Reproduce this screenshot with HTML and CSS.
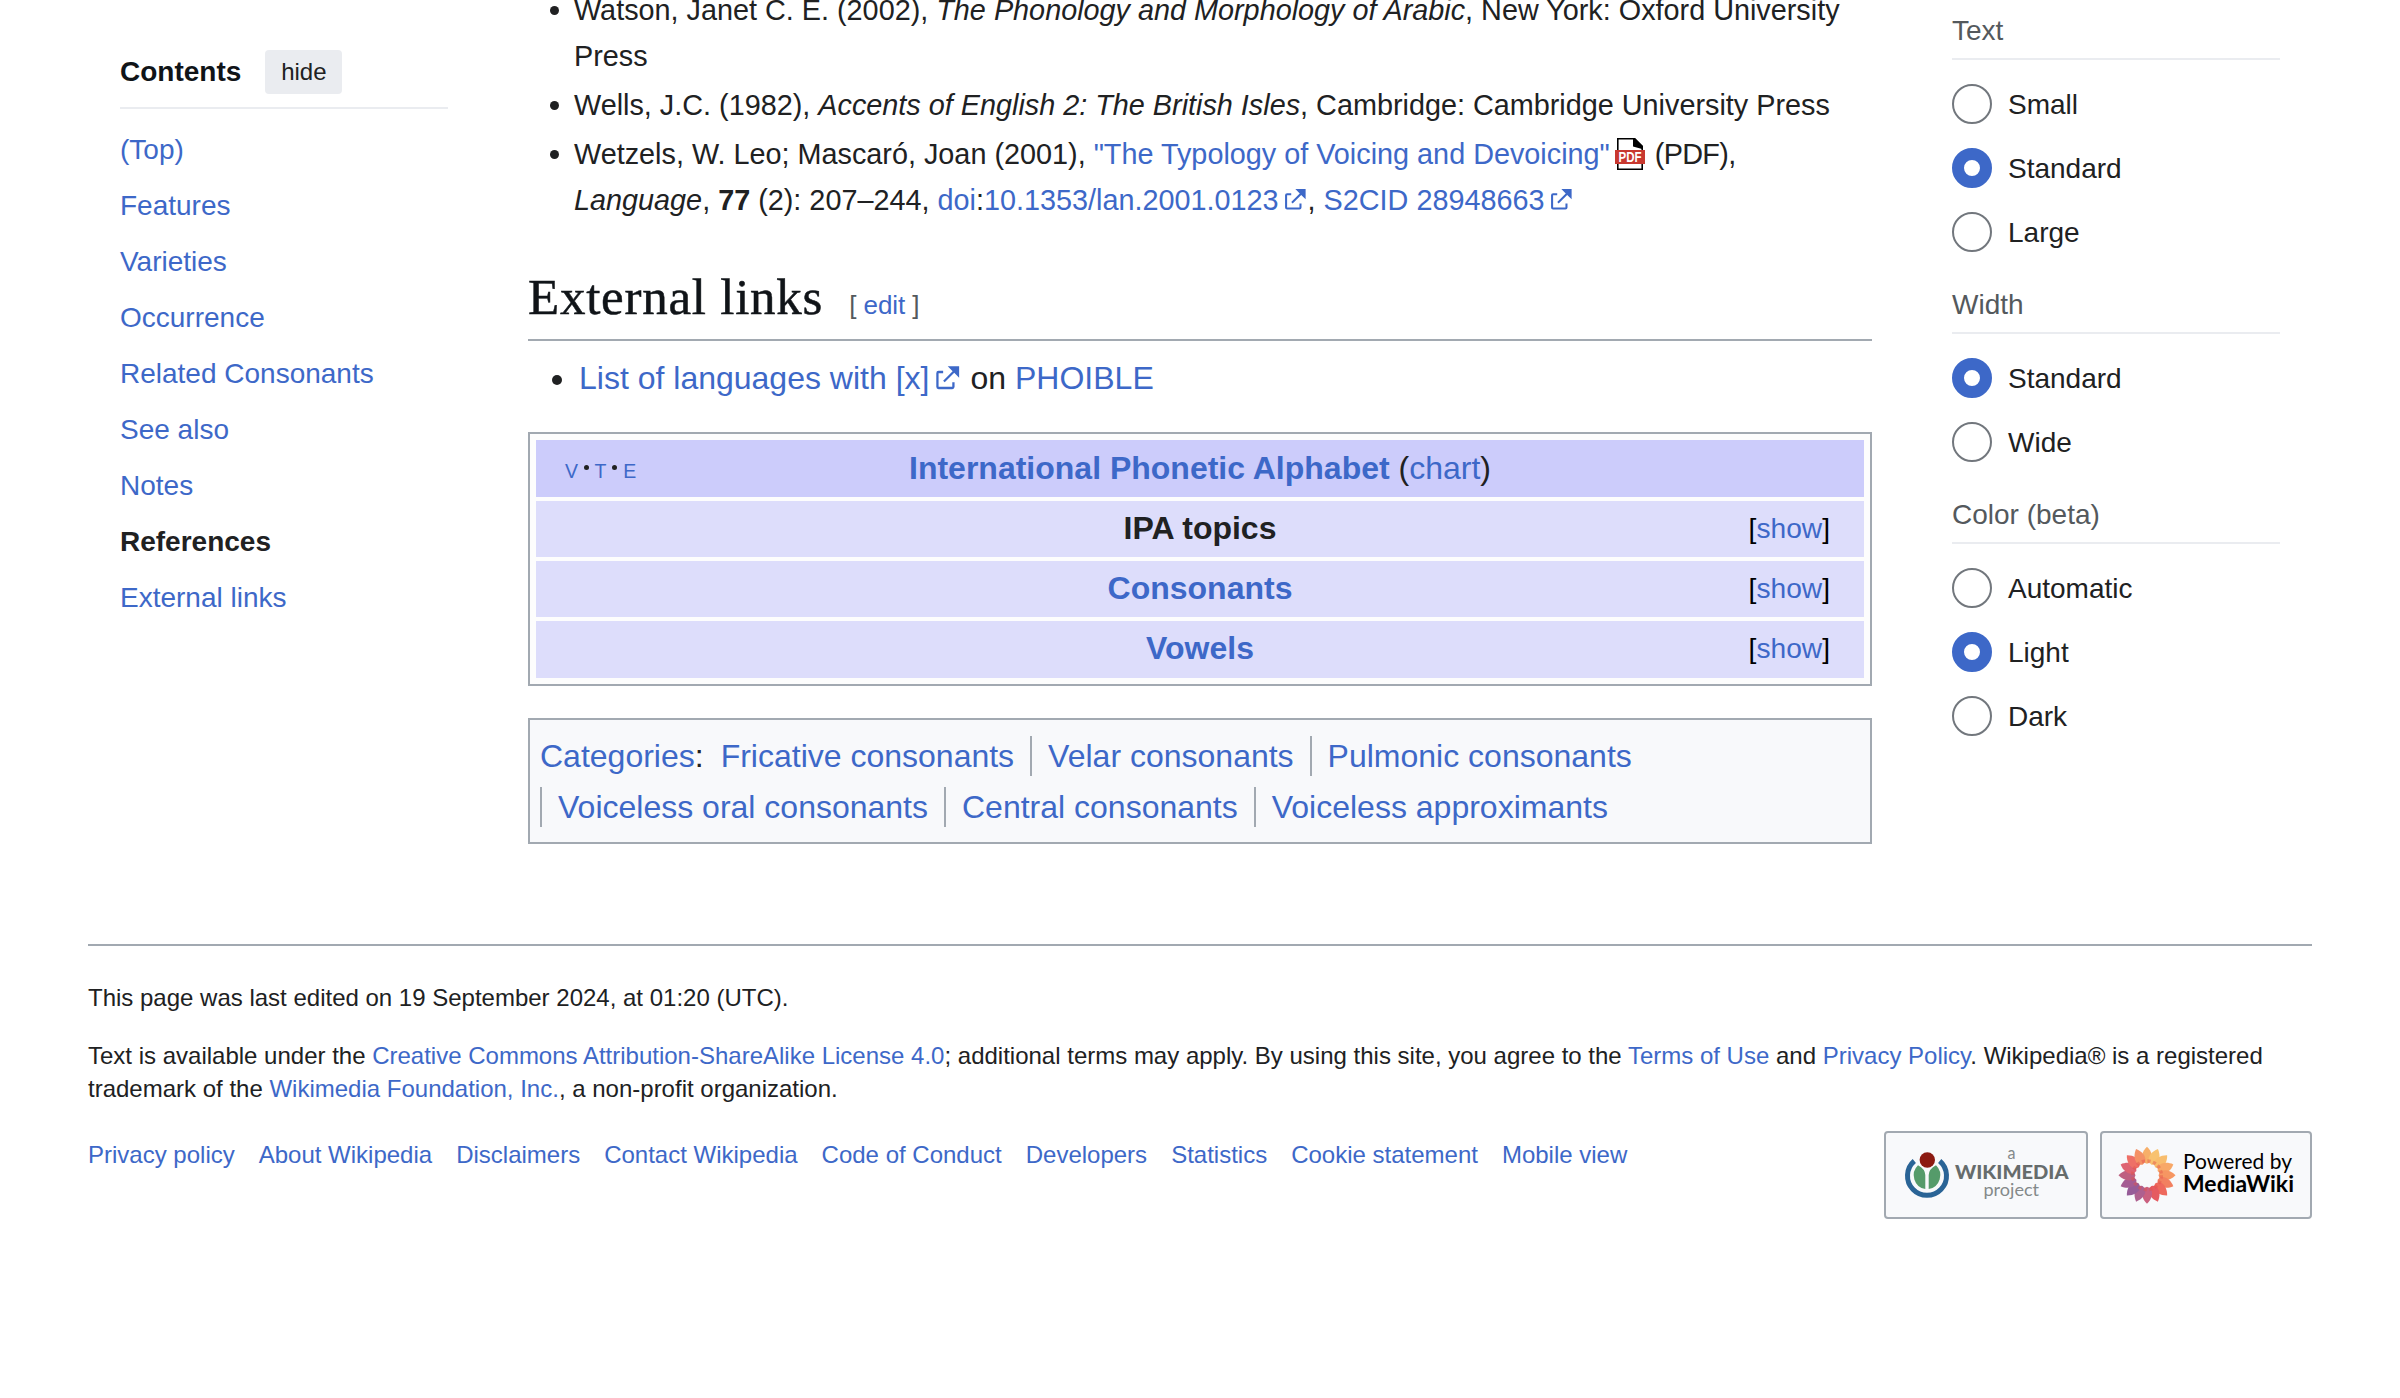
FILE: index.html
```html
<!DOCTYPE html>
<html lang="en">
<head>
<meta charset="utf-8">
<title>Voiceless velar fricative - Wikipedia</title>
<link rel="stylesheet" href="styles.css">
</head>
<body>
<svg class="defs" width="0" height="0" aria-hidden="true">
  <symbol id="ext" viewBox="0 0 12 12"><path fill="currentColor" d="M6 1h5v5L8.86 3.85 4.7 8 4 7.3l4.15-4.16zM2 3h2v1H2v6h6V8h1v2a1 1 0 0 1-1 1H2a1 1 0 0 1-1-1V4a1 1 0 0 1 1-1"/></symbol>
</svg>
<div class="columns">
  <nav class="toc">
    <div class="toc-head"><strong>Contents</strong><button class="hide" type="button">hide</button></div>
    <ul class="toc-list">
      <li><a href="#">(Top)</a></li>
      <li><a href="#">Features</a></li>
      <li><a href="#">Varieties</a></li>
      <li><a href="#">Occurrence</a></li>
      <li><a href="#">Related Consonants</a></li>
      <li><a href="#">See also</a></li>
      <li><a href="#">Notes</a></li>
      <li class="active">References</li>
      <li><a href="#">External links</a></li>
    </ul>
  </nav>
  <main class="content">
    <ul class="refs">
      <li>Watson, Janet C. E. (2002), <i>The Phonology and Morphology of Arabic</i>, New York: Oxford University Press</li>
      <li>Wells, J.C. (1982), <i>Accents of English 2: The British Isles</i>, Cambridge: Cambridge University Press</li>
      <li>Wetzels, W. Leo; Mascaró, Joan (2001), <a href="#">"The Typology of Voicing and Devoicing"<svg class="pdf" viewBox="0 0 30 32"><path d="M2.8.8h16.700L27.200 8.500V31.200H2.800z" fill="#fff" stroke="#000" stroke-width="1.600"/><path d="M18 0h2l8 8v3.200L18 8.500z" fill="#000"/><path d="M0 12h30v14H0z" fill="#c8382f"/><text x="3.500" y="23.800" textLength="23" lengthAdjust="spacingAndGlyphs">PDF</text></svg></a> <span class="format">(PDF)</span>, <i>Language</i>, <b>77</b> (2): 207–244, <a href="#">doi</a>:<a href="#">10.1353/lan.2001.0123<svg class="ext"><use href="#ext"/></svg></a>, <a href="#">S2CID</a> <a href="#">28948663<svg class="ext"><use href="#ext"/></svg></a></li>
    </ul>
    <div class="heading"><h2>External links</h2><span class="edit">[<a href="#">edit</a>]</span></div>
    <ul class="links">
      <li><a href="#">List of languages with [x]<svg class="ext"><use href="#ext"/></svg></a> on <a href="#">PHOIBLE</a></li>
    </ul>
    <section class="navbox">
      <div class="row title">
        <span class="vte"><a href="#">V</a><i></i><a href="#">T</a><i></i><a href="#">E</a></span>
        <span class="name"><a href="#"><b>International Phonetic Alphabet</b></a> (<a href="#">chart</a>)</span>
      </div>
      <div class="row"><b class="name">IPA topics</b><span class="show">[<a href="#">show</a>]</span></div>
      <div class="row"><b class="name"><a href="#">Consonants</a></b><span class="show">[<a href="#">show</a>]</span></div>
      <div class="row last"><b class="name"><a href="#">Vowels</a></b><span class="show">[<a href="#">show</a>]</span></div>
    </section>
    <div class="cats">
      <span class="cats-label"><a href="#">Categories</a>:</span>
      <a class="cat first" href="#">Fricative consonants</a>
      <a class="cat" href="#">Velar consonants</a>
      <a class="cat" href="#">Pulmonic consonants</a>
      <a class="cat" href="#">Voiceless oral consonants</a>
      <a class="cat" href="#">Central consonants</a>
      <a class="cat" href="#">Voiceless approximants</a>
    </div>
  </main>
  <aside class="appearance">
    <section><h3>Text</h3>
      <label><span class="radio"></span>Small</label>
      <label><span class="radio on"></span>Standard</label>
      <label><span class="radio"></span>Large</label></section>
    <section><h3>Width</h3>
      <label><span class="radio on"></span>Standard</label>
      <label><span class="radio"></span>Wide</label></section>
    <section><h3>Color (beta)</h3>
      <label><span class="radio"></span>Automatic</label>
      <label><span class="radio on"></span>Light</label>
      <label><span class="radio"></span>Dark</label></section>
  </aside>
</div>
<footer class="footer">
  <p>This page was last edited on 19 September 2024, at 01:20 (UTC).</p>
  <p>Text is available under the <a href="#">Creative Commons Attribution-ShareAlike License 4.0</a>; additional terms may apply. By using this site, you agree to the <a href="#">Terms of Use</a> and <a href="#">Privacy Policy</a>. Wikipedia® is a registered trademark of the <a href="#">Wikimedia Foundation, Inc.</a>, a non-profit organization.</p>
  <div class="footer-row">
    <nav class="places"><a href="#">Privacy policy</a><a href="#">About Wikipedia</a><a href="#">Disclaimers</a><a href="#">Contact Wikipedia</a><a href="#">Code of Conduct</a><a href="#">Developers</a><a href="#">Statistics</a><a href="#">Cookie statement</a><a href="#">Mobile view</a></nav>
    <div class="badges">
      <a class="badge" href="#"><svg width="200" height="84" viewBox="2 2 200 84">
        <path d="M30.300 30A19.500 19.500 0 1 0 55.700 30" fill="none" stroke="#2a6496" stroke-width="5"/>
        <path d="M34 34.300Q41 38 41.300 44V58A13.900 13.900 0 0 1 34 34.300zM52 34.300Q45 38 44.700 44V58A13.900 13.900 0 0 0 52 34.300z" fill="#559b6a"/>
        <circle cx="43.300" cy="29" r="7.700" fill="#8c1a11"/>
        <g class="wm"><text x="123.500" y="28.300" textLength="8" lengthAdjust="spacingAndGlyphs">a</text>
        <text class="wm-name" x="71" y="47.700" textLength="113.500" lengthAdjust="spacingAndGlyphs">WIKIMEDIA</text>
        <text x="99.500" y="64.700" textLength="55.500" lengthAdjust="spacingAndGlyphs">project</text></g>
      </svg></a>
      <a class="badge" href="#"><svg width="208" height="84" viewBox="2 2 208 84">
        <g transform="translate(47 44.300)" opacity=".9">
          <g fill="#f7a85a"><path id="p" d="M0-28.500C4.800-24 6.200-18 4.200-14.500Q2.500-12 0-11.500Q-2.500-12-4.200-14.500C-6.200-18-4.800-24 0-28.500z"/></g>
          <use href="#p" transform="rotate(22.500)" fill="#f9bd62"/>
          <use href="#p" transform="rotate(45)" fill="#f9b75e"/>
          <use href="#p" transform="rotate(67.500)" fill="#f8a058"/>
          <use href="#p" transform="rotate(90)" fill="#f68c52"/>
          <use href="#p" transform="rotate(112.500)" fill="#f27450"/>
          <use href="#p" transform="rotate(135)" fill="#ee5a4c"/>
          <use href="#p" transform="rotate(157.500)" fill="#e44a50"/>
          <use href="#p" transform="rotate(180)" fill="#c65072"/>
          <use href="#p" transform="rotate(202.500)" fill="#a65084"/>
          <use href="#p" transform="rotate(225)" fill="#8c4c8e"/>
          <use href="#p" transform="rotate(247.500)" fill="#9c4c88"/>
          <use href="#p" transform="rotate(270)" fill="#b85074"/>
          <use href="#p" transform="rotate(292.500)" fill="#dc5464"/>
          <use href="#p" transform="rotate(315)" fill="#ee6258"/>
          <use href="#p" transform="rotate(337.500)" fill="#f48656"/>
          <circle r="14.300" fill="none" stroke="#e04038" stroke-opacity=".45" stroke-width="3.500" stroke-dasharray="3.200 2.416"/>
        </g>
        <g class="mw"><text x="83" y="38" textLength="109" lengthAdjust="spacingAndGlyphs">Powered by</text>
        <text class="mw-name" x="83" y="61.300" textLength="111" lengthAdjust="spacingAndGlyphs">MediaWiki</text></g>
      </svg></a>
    </div>
  </div>
</footer>
</body>
</html>
```
FILE: styles.css
```css
* { box-sizing: border-box; }
body { margin: 0; background: #fff; color: #202122; font-family: "Liberation Sans", Arial, sans-serif; font-size: 32px; height: 1398px; overflow: hidden; }
a { color: #3d68c8; text-decoration: none; }
ul { list-style: none; margin: 0; padding: 0; }
.defs { display: block; height: 0; }

.columns { display: grid; grid-template-columns: 328px 1344px 328px; gap: 80px; padding-left: 120px; height: 944px; }

.toc { padding-top: 50px; font-size: 28px; }
.toc-head { display: flex; align-items: center; height: 59px; padding-bottom: 13px; border-bottom: 2px solid #eaecf0; color: #101418; }
.hide { margin-left: 24px; width: 77px; height: 44px; border: 0; border-radius: 4px; padding: 0; background: #eaecf0; color: #202122; font: 24px "Liberation Sans", Arial, sans-serif; }
.toc-list { padding-top: 13px; line-height: 56px; }
.active { font-weight: bold; }

.refs { margin-top: -13px; font-size: 28.8px; line-height: 46.08px; padding-left: 46px; }
.refs li { margin-bottom: 2.88px; }
.refs li::before, .links li::before { content: ""; float: left; width: 9px; height: 9px; border-radius: 50%; background: #202122; margin: 19px 0 0 -24.500px; }
.links li::before { width: 10px; height: 10px; margin: 22px 0 0 -27px; }
.ext { width: .857em; height: .857em; margin-left: .15em; vertical-align: -.07em; }
.pdf { width: 30px; height: 32px; margin: -8px 2px -8px 5px; vertical-align: 2px; }
.format { letter-spacing: -.7px; }
.pdf text { font: bold 14px "Liberation Sans", sans-serif; fill: #fff; }

.heading { display: flex; align-items: baseline; height: 77px; margin-top: 41px; border-bottom: 2px solid #a2a9b1; }
.heading h2 { margin: 0; font: 51px/66px "Liberation Serif", Georgia, serif; letter-spacing: .75px; color: #101418; -webkit-text-stroke: .5px #101418; }
.edit { display: flex; gap: 7px; margin-left: 26px; font-size: 26px; color: #54595d; }
.links { margin: 12px 0 28px; padding-left: 51px; line-height: 51px; }

.navbox { display: flex; flex-direction: column; gap: 4px; border: 2px solid #a2a9b1; padding: 6px; background: #fdfdfd; }
.row { display: grid; grid-template-columns: 1fr auto 1fr; height: 56px; line-height: 54px; background: #ddddfb; }
.name { grid-column: 2; }
.title { height: 57px; line-height: 56px; background: #ccccfb; }
.last { height: 57px; }
.show { grid-column: 3; justify-self: end; padding-right: 34px; font-size: 28.160px; color: #000; line-height: 55px; }
.vte { display: flex; align-items: center; padding: 3px 0 0 29px; font-size: 19.500px; }
.vte i { width: 5px; height: 5px; border-radius: 50%; background: #202122; margin: -7px 5.800px 0; }

.cats { display: flex; flex-wrap: wrap; align-content: flex-start; row-gap: 11px; height: 126px; margin-top: 32px; padding: 16px 10px 0; border: 2px solid #a2a9b1; background: #f8f9fb; line-height: 40px; }
.cat { border-left: 2px solid #a2a9b1; padding: 0 16px; }
.first { border-left: 0; padding-left: 17px; }

.appearance { padding-top: 10px; font-size: 28px; line-height: 42px; }
.appearance section { display: flex; flex-direction: column; gap: 24px; margin-bottom: 32px; }
.appearance h3 { margin: 0; height: 50px; border-bottom: 2px solid #eaecf0; font-size: 28px; font-weight: normal; color: #54595d; }
.appearance label { display: flex; gap: 16px; height: 40px; }
.radio { width: 40px; height: 40px; border-radius: 50%; border: 2px solid #72777d; }
.on { border: 12px solid #3d68c8; }

.footer { margin: 0 88px; border-top: 2px solid #a2a9b1; padding-top: 35px; font-size: 24px; line-height: 33px; }
.footer p { margin: 0 0 25px; }
.footer p + p { margin-bottom: 26px; }
.footer-row { display: flex; justify-content: space-between; }
.places { display: flex; gap: 24px; padding-top: 7px; }
.badges { display: flex; gap: 12px; }
.badge { height: 88px; border: 2px solid #a2a9b1; border-radius: 4px; background: #f8f9fb; }
.badge svg { display: block; }
.wm { font: 18px Lato, sans-serif; fill: #84898a; }
.wm-name { font-weight: 900; fill: #666c6c; }
.mw { font: 22px Lato, sans-serif; fill: #000; }
.mw-name { font-weight: 700; }
```
